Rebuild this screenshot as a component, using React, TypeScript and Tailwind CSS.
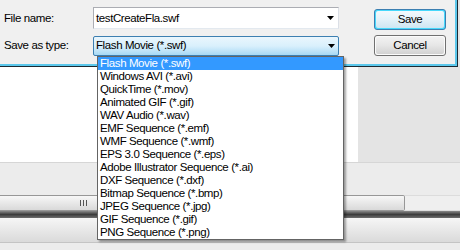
import React from "react";

const items = [
  "Flash Movie (*.swf)",
  "Windows AVI (*.avi)",
  "QuickTime (*.mov)",
  "Animated GIF (*.gif)",
  "WAV Audio (*.wav)",
  "EMF Sequence (*.emf)",
  "WMF Sequence (*.wmf)",
  "EPS 3.0 Sequence (*.eps)",
  "Adobe Illustrator Sequence (*.ai)",
  "DXF Sequence (*.dxf)",
  "Bitmap Sequence (*.bmp)",
  "JPEG Sequence (*.jpg)",
  "GIF Sequence (*.gif)",
  "PNG Sequence (*.png)",
];

function Arrow() {
  return (
    <svg width="7" height="4" viewBox="0 0 7 4" className="block">
      <path d="M0 0H7L3.5 4Z" fill="#000" />
    </svg>
  );
}

export default function App() {
  return (
    <div className="relative w-[460px] h-[250px] overflow-hidden bg-[#e4e4e4] font-['Liberation_Sans',Arial,sans-serif] text-[11.5px] tracking-[-0.4px] text-black leading-none">
      {/* Dialog */}
      <div className="flex h-[67px]">
        <div className="w-[458px] border-r border-b border-[#1c2a33]">
          <div className="h-full border-r-2 border-b-2 border-[#5cc8ec] bg-[#f0f0f0]">
            <div className="flex pt-[7px]">
              <div className="w-[93px] pl-[4px] flex flex-col">
                <div className="h-[22px] flex items-center pt-[1px]">File name:</div>
                <div className="h-[20px] mt-[7px] flex items-center">Save as type:</div>
              </div>
              <div className="w-[246px] flex flex-col">
                <div className="h-[22px] bg-white border border-[#abadb3] border-r-[#dbdfe6] border-b-[#e3e9ef] flex items-center pl-[2px] pr-[4px]">
                  <span className="flex-1 pt-[1px]">testCreateFla.swf</span>
                  <Arrow />
                </div>
                <div className="h-[20px] mt-[7px] rounded-[2px] border border-[#3c7fb1] bg-gradient-to-b from-[#eaf6fd] via-[#d9f0fc] to-[#a7d9f5] flex items-center pl-[2px] pr-[3px]">
                  <span className="flex-1">Flash Movie (*.swf)</span>
                  <Arrow />
                </div>
              </div>
              <div className="ml-[35px] w-[72px] flex flex-col pt-[2px]">
                <div className="h-[21px] rounded-[3px] border border-[#3c7fb1] p-[1px] bg-[#48d8fb]">
                  <div className="h-full rounded-[2px] flex items-center justify-center bg-gradient-to-b from-[#f3f9fc] via-[#e4f2f9] to-[#cfe6f2]">
                    Save
                  </div>
                </div>
                <div className="h-[21px] mt-[5px] rounded-[3px] border border-[#707070] p-[1px] bg-[#fbfbfb]">
                  <div className="h-full rounded-[2px] flex items-center justify-center bg-gradient-to-b from-[#f2f2f2] via-[#e6e6e6] to-[#d2d2d2]">
                    Cancel
                  </div>
                </div>
              </div>
            </div>
          </div>
        </div>
        <div className="flex-1 bg-[#e4e4e4]" />
      </div>

      {/* Background application */}
      <div className="flex h-[95px]">
        <div className="w-[358px] bg-white" />
        <div className="flex-1 bg-[#e4e4e4]" />
      </div>
      <div className="h-[33px] bg-[#ececec] border-t border-[#d6d6d6]" />
      <div className="flex h-[16px] bg-[#efefef]">
        <div className="w-[405px] rounded-r-[2px] border border-l-0 border-[#979797] bg-gradient-to-b from-[#f7f7f7] to-[#d9d9d9] flex items-center">
          <div className="ml-[80px] flex gap-[2px]">
            <div className="w-[1px] h-[6px] bg-[#555]" />
            <div className="w-[1px] h-[6px] bg-[#555]" />
            <div className="w-[1px] h-[6px] bg-[#555]" />
          </div>
        </div>
        <div className="flex-1 border-y border-[#dcdcdc]" />
      </div>
      <div className="h-[7px] bg-gradient-to-b from-[#8a8a8a] via-[#3c3c3c] to-[#6e6e6e]" />
      <div className="h-[24px] bg-gradient-to-b from-[#f6f6f6] to-[#dadada]" />
      <div className="h-[8px] bg-[#ececec] border-t border-[#c4c4c4]" />

      {/* Dropdown list */}
      <div className="absolute left-[97px] top-[56px] w-[247px] bg-white border border-[#646464] shadow-[2px_2px_2px_rgba(0,0,0,0.35)]">
        {items.map((t, i) => (
          <div
            key={t}
            className={
              i === 0
                ? "h-[13px] flex items-center pl-[2px] bg-[#3399ff] text-white"
                : "h-[13px] flex items-center pl-[2px]"
            }
          >
            {t}
          </div>
        ))}
      </div>
    </div>
  );
}
